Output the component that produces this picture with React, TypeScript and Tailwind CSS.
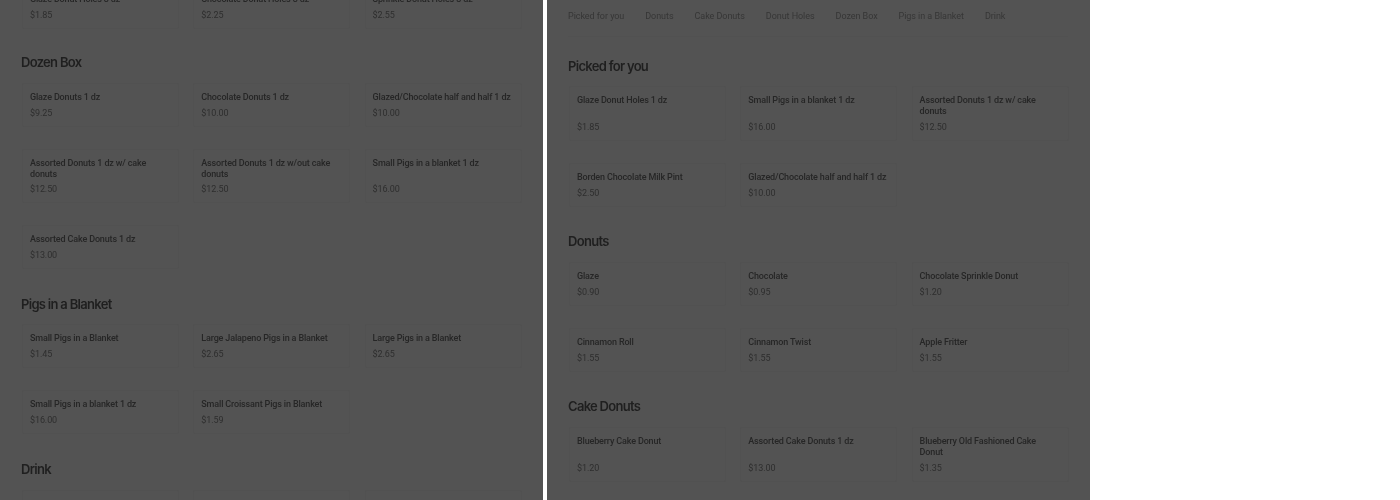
type Item = { name: string; price: string };

const Card = ({ item, h }: { item: Item; h: string }) => (
  <div className={`${h} w-[157px] rounded-[2px] border border-[#515151] pl-[7px] pr-[7px] pt-[8px] pb-[7px] flex flex-col justify-between`}>
    <div className="text-[9px] leading-[10.5px] font-medium tracking-[-0.15px] text-[#262626]">{item.name}</div>
    <div className="text-[9px] leading-[11px] tracking-[-0.1px] text-[#2e2e2e]">{item.price}</div>
  </div>
);

const Row = ({ items, h, cls }: { items: Item[]; h: string; cls: string }) => (
  <div className={`flex gap-[14.3px] ${cls}`}>
    {items.map((item) => (
      <Card key={item.name} item={item} h={h} />
    ))}
  </div>
);

const Title = ({ children, cls }: { children: string; cls: string }) => (
  <h2 className={`font-['Inter',sans-serif] -ml-[1px] text-[13px] leading-[16px] font-semibold tracking-[-0.7px] text-[#1f1f1f] ${cls}`}>{children}</h2>
);

export default function App() {
  const tabs = ["Picked for you", "Donuts", "Cake Donuts", "Donut Holes", "Dozen Box", "Pigs in a Blanket", "Drink"];
  return (
    <div className="font-['Roboto','Liberation_Sans',sans-serif] flex h-[500px] w-[1400px] overflow-hidden bg-white">
      {/* left panel */}
      <div className="h-full w-[543px] shrink-0 overflow-hidden bg-[#535353] pl-[22px]">
        <div className="-mt-[15px] blur-[0.3px]">
          <Row
            cls=""
            h="h-[44px]"
            items={[
              { name: "Glaze Donut Holes 3 dz", price: "$1.85" },
              { name: "Chocolate Donut Holes 3 dz", price: "$2.25" },
              { name: "Sprinkle Donut Holes 3 dz", price: "$2.55" },
            ]}
          />
          <Title cls="mt-[25px]">Dozen Box</Title>
          <Row
            cls="mt-[13px]"
            h="h-[44px]"
            items={[
              { name: "Glaze Donuts 1 dz", price: "$9.25" },
              { name: "Chocolate Donuts 1 dz", price: "$10.00" },
              { name: "Glazed/Chocolate half and half 1 dz", price: "$10.00" },
            ]}
          />
          <Row
            cls="mt-[22px]"
            h="h-[54px]"
            items={[
              { name: "Assorted Donuts 1 dz w/ cake donuts", price: "$12.50" },
              { name: "Assorted Donuts 1 dz w/out cake donuts", price: "$12.50" },
              { name: "Small Pigs in a blanket 1 dz", price: "$16.00" },
            ]}
          />
          <Row cls="mt-[22px]" h="h-[44px]" items={[{ name: "Assorted Cake Donuts 1 dz", price: "$13.00" }]} />
          <Title cls="mt-[27px]">Pigs in a Blanket</Title>
          <Row
            cls="mt-[12px]"
            h="h-[44px]"
            items={[
              { name: "Small Pigs in a Blanket", price: "$1.45" },
              { name: "Large Jalapeno Pigs in a Blanket", price: "$2.65" },
              { name: "Large Pigs in a Blanket", price: "$2.65" },
            ]}
          />
          <Row
            cls="mt-[22px]"
            h="h-[44px]"
            items={[
              { name: "Small Pigs in a blanket 1 dz", price: "$16.00" },
              { name: "Small Croissant Pigs in Blanket", price: "$1.59" },
            ]}
          />
          <Title cls="mt-[27px]">Drink</Title>
          <Row
            cls="mt-[13px]"
            h="h-[44px]"
            items={[
              { name: "Dr Pepper 20 oz", price: "$2.50" },
              { name: "Coca-Cola 20 oz", price: "$2.50" },
              { name: "Sprite 20 oz", price: "$2.50" },
            ]}
          />
        </div>
      </div>
      <div className="h-full w-[4px] shrink-0 bg-white" />
      {/* right panel */}
      <div className="h-full w-[543px] shrink-0 overflow-hidden bg-[#535353] pl-[22px]">
        <div className="blur-[0.3px]">
          <div className="-ml-[1px] flex h-[37px] w-[500px] gap-[21px] border-b border-[#515151] pt-[10px] text-[9px] leading-[12px] tracking-[-0.05px] text-[#363636]">
            {tabs.map((t) => (
              <span key={t}>{t}</span>
            ))}
          </div>
          <Title cls="mt-[21px]">Picked for you</Title>
          <Row
            cls="mt-[12px]"
            h="h-[55px]"
            items={[
              { name: "Glaze Donut Holes 1 dz", price: "$1.85" },
              { name: "Small Pigs in a blanket 1 dz", price: "$16.00" },
              { name: "Assorted Donuts 1 dz w/ cake donuts", price: "$12.50" },
            ]}
          />
          <Row
            cls="mt-[22px]"
            h="h-[44px]"
            items={[
              { name: "Borden Chocolate Milk Pint", price: "$2.50" },
              { name: "Glazed/Chocolate half and half 1 dz", price: "$10.00" },
            ]}
          />
          <Title cls="mt-[26px]">Donuts</Title>
          <Row
            cls="mt-[13px]"
            h="h-[44px]"
            items={[
              { name: "Glaze", price: "$0.90" },
              { name: "Chocolate", price: "$0.95" },
              { name: "Chocolate Sprinkle Donut", price: "$1.20" },
            ]}
          />
          <Row
            cls="mt-[22px]"
            h="h-[44px]"
            items={[
              { name: "Cinnamon Roll", price: "$1.55" },
              { name: "Cinnamon Twist", price: "$1.55" },
              { name: "Apple Fritter", price: "$1.55" },
            ]}
          />
          <Title cls="mt-[26px]">Cake Donuts</Title>
          <Row
            cls="mt-[13px]"
            h="h-[55px]"
            items={[
              { name: "Blueberry Cake Donut", price: "$1.20" },
              { name: "Assorted Cake Donuts 1 dz", price: "$13.00" },
              { name: "Blueberry Old Fashioned Cake Donut", price: "$1.35" },
            ]}
          />
        </div>
      </div>
    </div>
  );
}
